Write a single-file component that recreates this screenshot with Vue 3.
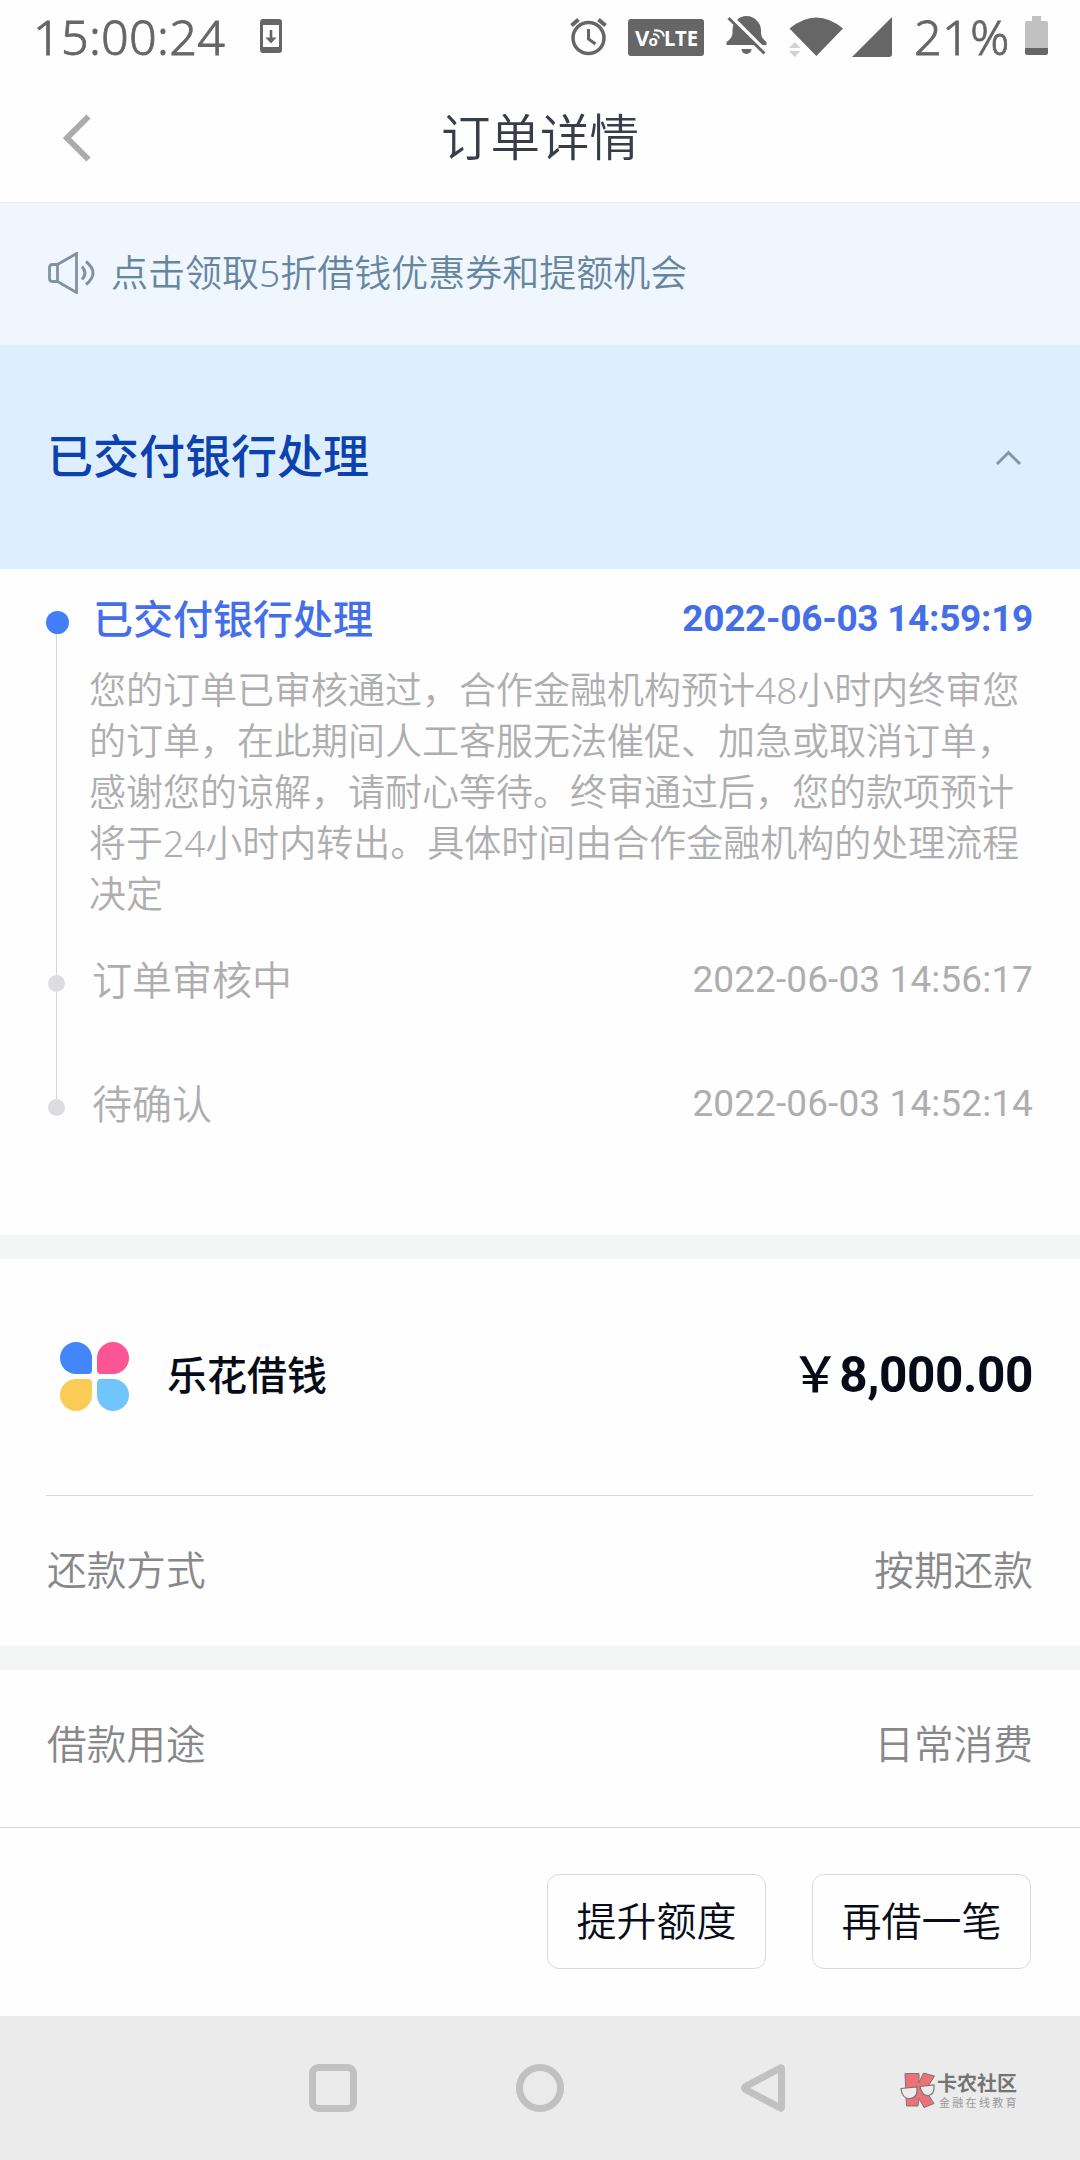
<script setup>
    import { ref } from 'vue';

    const steps = ref([
        {
            title: '已交付银行处理',
            time: '2022-06-03 14:59:19',
            desc: '您的订单已审核通过，合作金融机构预计48小时内终审您的订单，在此期间人工客服无法催促、加急或取消订单，感谢您的谅解，请耐心等待。终审通过后，您的款项预计将于24小时内转出。具体时间由合作金融机构的处理流程决定',
        },
        { title: '订单审核中', time: '2022-06-03 14:56:17' },
        { title: '待确认', time: '2022-06-03 14:52:14' },
    ]);

    const actions = ref(['提升额度', '再借一笔']);
</script>


<template>
    <div class="page">
        <div class="status">
            <span class="clock">15:00:24</span>
            <svg class="download" width="22" height="34" viewBox="0 0 22 34">
                <rect width="22" height="34" rx="3" fill="#666" />
                <rect x="3" y="6" width="16" height="22" fill="#fefefe" />
                <path d="M9.7 11h2.6v7.500h4.200l-5.500 6-5.500-6h4.200z" fill="#666" />
            </svg>
            <svg class="icons" width="324" height="44" viewBox="568 14 324 44">
                <g fill="none" stroke="#666">
                    <circle cx="588.500" cy="38" r="15.500" stroke-width="3.500" />
                    <path d="M588.500 29v10l7 5" stroke-width="3" />
                    <path d="M571.500 25.500l7-6M605.500 25.500l-7-6" stroke-width="4" />
                </g>
                <rect x="628" y="19" width="76" height="37" rx="3" fill="#666" />
                <g class="volte" fill="#fefefe">
                    <text x="635" y="45.500" font-size="22">V</text>
                    <text x="648.500" y="45.500" font-size="15">o</text>
                    <text x="664" y="45.500" font-size="22" textLength="34" lengthAdjust="spacingAndGlyphs">LTE</text>
                </g>
                <path d="M653 34.500q5-1 6 4M654 30.500q9-1 10 6" fill="none" stroke="#fefefe" stroke-width="2" />
                <path d="M726.500 45v-3q6-4 6-9v-3c0-7 6-14 14-14s14.500 7 14.500 14v3q0 5 5.500 9v3z" fill="#666" />
                <path d="M741.500 49h10a5 5 0 0 1-10 0z" fill="#666" />
                <path d="M731 16.500l36 36" stroke="#fefefe" stroke-width="4" />
                <path d="M728.500 18l36 35.500" stroke="#666" stroke-width="3" />
                <path d="M789.500 28.500q27-22 53.500 0l-26.700 27.500z" fill="#666" />
                <path d="M789 48l5.700-6 5.700 6zM789 51l5.700 6 5.700-6z" fill="#d2d2d2" />
                <path d="M852 57l40-40v37q0 3-3 3z" fill="#666" />
            </svg>
            <span class="percent">21%</span>
            <svg class="battery" width="23" height="39" viewBox="0 0 23 39">
                <path d="M7 0h9v5h5q2 0 2 2v25h-23v-25q0-2 2-2h5z" fill="#c1c1c1" />
                <path d="M0 32h23v4.500q0 2.500-2.500 2.500h-18q-2.500 0-2.500-2.500z" fill="#666" />
            </svg>
        </div>

        <header class="header">
            <svg class="back" width="28" height="48" viewBox="0 0 28 48">
                <path d="M25.500 2.500L4 24l21.500 21.500" fill="none" stroke="#ababad" stroke-width="6" />
            </svg>
            <h1>订单详情</h1>
        </header>

        <div class="notice">
            <svg width="48" height="42" viewBox="0 0 48 42" fill="none" stroke="#8292a5" stroke-width="2.800">
                <path d="M9.500 12.500L28.500 1.500v39L9.500 29.500zM9.500 12.500H4.500q-3 0-3 3v11q0 3 3 3h5" />
                <path d="M34 14.500q6 6.500 0 13M38 9.500q14 11.500 0 23" stroke-width="3" />
            </svg>
            <span>点击领取5折借钱优惠券和提额机会</span>
        </div>

        <div class="banner">
            <h2>已交付银行处理</h2>
            <svg width="28" height="18" viewBox="0 0 28 18">
                <path d="M3 16L14.500 4.500 26 16" fill="none" stroke="#8696aa" stroke-width="3" />
            </svg>
        </div>

        <ul class="timeline">
            <li v-for="(step, index) in steps" :key="step.time" class="step" :class="{ active: index === 0 }">
                <div class="rail">
                    <i class="dot"></i>
                    <i v-if="index < steps.length - 1" class="line"></i>
                </div>
                <div class="body">
                    <div class="row">
                        <span class="name">{{ step.title }}</span>
                        <span class="time">{{ step.time }}</span>
                    </div>
                    <p v-if="step.desc">{{ step.desc }}</p>
                </div>
            </li>
        </ul>

        <section class="product">
            <div class="brand">
                <div class="flower">
                    <i class="blue"></i>
                    <i class="pink"></i>
                    <i class="yellow"></i>
                    <i class="sky"></i>
                </div>
                <span class="brand-name">乐花借钱</span>
                <span class="amount"><b>￥</b>8,000.00</span>
            </div>
            <div class="item">
                <span>还款方式</span>
                <span>按期还款</span>
            </div>
        </section>

        <section class="item usage">
            <span>借款用途</span>
            <span>日常消费</span>
        </section>

        <div class="actions">
            <button v-for="action in actions" :key="action">{{ action }}</button>
        </div>

        <nav class="nav">
            <svg class="keys" width="476" height="48" viewBox="309 0 476 48" fill="none" stroke="#c1c1c1" stroke-width="7">
                <rect x="312.500" y="3.500" width="41" height="41" rx="6" />
                <circle cx="540" cy="24" r="20.500" />
                <path d="M781.500 4.500v39q0 1-1.200 .4L745.500 25.500q-1.800-1.500 0-3L780.300 4q1.200-.6 1.200 .5z" stroke-linejoin="round" />
            </svg>
            <div class="watermark">
                <svg width="36" height="37" viewBox="0 0 36 37">
                    <g fill="#f0707a" stroke="#777" stroke-width="1">
                        <path d="M5 1.500h14v9L23.500 1l11 3-9 14.500 8.500 13-10 4-5-9-1 7.500L6.500 34z" />
                    </g>
                    <g fill="#ececec" stroke="#777" stroke-width="1.200">
                        <path d="M1 16.500l16-1.500q1 11-7 11.500Q2 27 1 16.500z" />
                        <path d="M20 14.500l14-1.500q1 9-5.500 10.500Q22 24 20 14.500z" />
                    </g>
                </svg>
                <div class="mark-text">
                    <strong>卡农社区</strong>
                    <small>金融在线教育</small>
                </div>
            </div>
        </nav>
    </div>
</template>

<style>
body {
    margin: 0;
    background: #fefefe;
}
</style>

<style scoped>
* {
    box-sizing: border-box;
    padding: 0;
    margin: 0;
}

.page {
    display: flex;
    flex-direction: column;
    width: 1080px;
    height: 2160px;
    overflow: hidden;
    background: #fefefe;
    font-family: "Noto Sans", "Noto Sans CJK SC", sans-serif;
    font-weight: 350;
}

svg {
    display: block;
    flex: none;
}

.status {
    display: flex;
    align-items: flex-start;
    height: 74px;
    padding: 0 32px 0 33px;
    color: #666;
    font: 350 48.500px/72px "Noto Sans", "Open Sans", sans-serif;
}

.clock,
.percent {
    letter-spacing: 0.3px;
    -webkit-text-stroke: 0.8px #666;
}

.clock {
    width: 227px;
}

.download {
    margin-top: 19px;
}

.icons {
    margin: 14px 0 0 286px;
}

.percent {
    margin-left: 22px;
}

.battery {
    margin: 16px 0 0 auto;
}

.volte {
    font-family: "Noto Sans", sans-serif;
    font-weight: 700;
}

.header {
    position: relative;
    height: 129px;
    border-bottom: 1px solid #e8edf2;
}

.back {
    position: absolute;
    left: 63px;
    top: 40px;
}

h1 {
    color: #393d4a;
    font-family: "Noto Sans CJK SC", sans-serif;
    font-size: 49.500px;
    font-weight: 350;
    line-height: 121px;
    text-align: center;
}

.notice {
    display: flex;
    align-items: center;
    gap: 15px;
    height: 142px;
    padding: 0 48px 2px;
    color: #66869f;
    background: #eff6fe;
    font-size: 37px;
    line-height: 50px;
}

.banner {
    display: flex;
    align-items: center;
    justify-content: space-between;
    height: 224px;
    padding: 0 58px 0 47px;
    background: #ddeefe;
}

h2 {
    margin-top: -9px;
    color: #0c41ae;
    font-family: "Noto Sans CJK SC", sans-serif;
    font-size: 46px;
    font-weight: 500;
}

.timeline {
    height: 666px;
    padding: 28px 47px 0 46px;
    list-style: none;
}

.step {
    display: flex;
    height: 124px;
    color: #aeaeb0;
}

.step.active {
    height: 361px;
}

.rail {
    display: flex;
    flex-direction: column;
    flex: none;
    align-items: center;
    width: 21px;
    padding-top: 17px;
}

.dot {
    width: 17px;
    height: 17px;
    border-radius: 50%;
    background: #dddddf;
}

.line {
    flex: 1;
    width: 1px;
    margin-bottom: -17px;
    background: #d6d6d8;
}

.active .rail {
    width: 23px;
    padding-top: 14px;
}

.active .dot {
    width: 23px;
    height: 23px;
    background: #437dfa;
}

.active .line {
    margin-right: 2px;
}

.body {
    flex: 1;
    padding-left: 25px;
}

.active .body {
    padding-left: 24px;
}

.row {
    display: flex;
    justify-content: space-between;
    height: 44px;
    font-family: "Noto Sans CJK SC", sans-serif;
    font-size: 40px;
    line-height: 41px;
}

.time {
    font-family: Roboto, sans-serif;
    font-size: 37px;
    font-weight: 400;
    letter-spacing: 0.1px;
    line-height: 43px;
}

.active .row {
    color: #456fe9;
}

.active .name {
    font-weight: 500;
}

.active .time {
    font-weight: 700;
    letter-spacing: -0.3px;
}

p {
    width: 940px;
    margin: 23px 0 0 -4px;
    font-size: 37px;
    line-height: 51px;
}

.product {
    height: 435px;
    border-top: 24px solid #f4f6f6;
    border-bottom: 24px solid #f4f6f6;
}

.brand {
    display: flex;
    align-items: center;
    height: 237px;
    margin: 0 47px 0 46px;
    border-bottom: 1px solid #d9d9db;
    color: #070b18;
    font-family: "Noto Sans CJK SC", sans-serif;
    font-weight: 500;
}

.flower {
    display: grid;
    grid-template-columns: 32px 32px;
    grid-auto-rows: 32px;
    gap: 5px;
    margin: -2px 0 0 14px;
}

.blue {
    border-radius: 50% 50% 12% 50%;
    background: #4386fa;
}

.pink {
    border-radius: 50% 50% 50% 12%;
    background: #fb5595;
}

.yellow {
    border-radius: 50% 12% 50% 50%;
    background: #fbcc55;
}

.sky {
    border-radius: 12% 50% 50% 50%;
    background: #70c5fb;
}

.brand-name {
    margin: -8px 0 0 38px;
    font-size: 40px;
}

.amount {
    margin: -13px 0 0 auto;
    font-family: Roboto, "Noto Sans CJK SC", sans-serif;
    font-size: 49.500px;
    font-weight: 700;
    letter-spacing: -0.4px;
}

.amount b {
    font-family: "Noto Sans CJK SC", sans-serif;
    font-size: 49px;
    font-weight: 500;
}

.item {
    display: flex;
    align-items: center;
    justify-content: space-between;
    height: 150px;
    padding: 0 47px 7px;
    color: #88888a;
    font-family: "Noto Sans CJK SC", sans-serif;
    font-size: 39.700px;
}

.usage {
    height: 157px;
    padding-bottom: 14px;
}

.actions {
    display: flex;
    justify-content: flex-end;
    gap: 46px;
    height: 189px;
    padding: 46px 49px 0;
    border-top: 1px solid #d9d9db;
}

button {
    width: 219px;
    height: 95px;
    padding-bottom: 6px;
    border: 1px solid #d9d9db;
    border-radius: 12px;
    background: #fefefe;
    color: #080c19;
    font: 350 40px "Noto Sans CJK SC", sans-serif;
}

.nav {
    display: flex;
    align-items: flex-start;
    height: 144px;
    padding: 48px 0 0 309px;
    background: #ebebeb;
}

.watermark {
    display: flex;
    margin: 8px 0 0 115px;
}

.mark-text {
    display: flex;
    flex-direction: column;
    margin-left: 1px;
    white-space: nowrap;
}

strong {
    color: #747474;
    font-size: 20px;
    font-weight: 700;
    line-height: 24px;
}

small {
    padding-left: 2px;
    color: #999;
    font-size: 11px;
    font-weight: 400;
    letter-spacing: 2.300px;
    line-height: 13px;
}
</style>
